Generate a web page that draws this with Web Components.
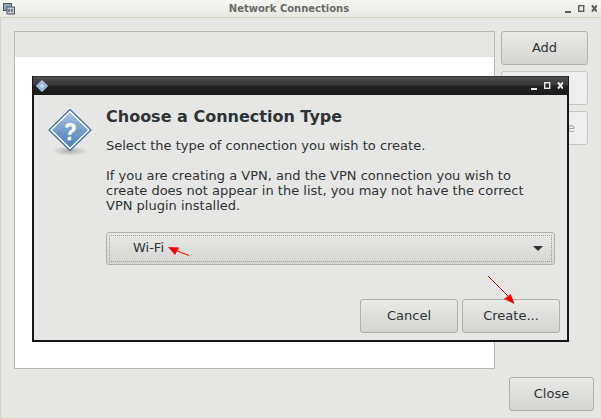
<!DOCTYPE html>
<html><head><meta charset="utf-8"><style>
html,body{margin:0;padding:0;background:#e6e6e4;overflow:hidden}
body{width:601px;height:419px;font-family:"DejaVu Sans",sans-serif;color:#2e3436}
</style></head><body>
<nc-window>
  <nc-list slot="list"></nc-list>
  <nc-button slot="side">Add</nc-button>
  <nc-button slot="side" disabled></nc-button>
  <nc-button slot="side" disabled><span style="display:block;width:100%;text-align:right;padding-right:12px;box-sizing:border-box">e</span></nc-button>
  <nc-button slot="close" style="width:85px">Close</nc-button>
</nc-window>
<nc-dialog></nc-dialog>
<nc-arrows></nc-arrows>
<script>
function def(name,html){
  customElements.define(name,class extends HTMLElement{
    constructor(){super();this.attachShadow({mode:'open'}).innerHTML=html;}
  });
}
const wmBtns=(c)=>`<svg width="32" height="10" viewBox="0 0 32 10" style="display:block;flex:none"><rect x="0" y="7" width="6" height="2" fill="${c}"/><rect x="13.7" y="1.7" width="5" height="5.6" fill="none" stroke="${c}" stroke-width="1.4"/><path d="M27 1.5l5 6M32 1.5l-5 6" stroke="${c}" stroke-width="2"/></svg>`;
def('nc-button',`<style>
:host{display:flex;align-items:center;justify-content:center;box-sizing:border-box;width:87px;height:34px;padding-bottom:2px;border:1px solid #b0b0ac;border-radius:3px;background:linear-gradient(#e9e9e7,#d4d4d1);font:13px "DejaVu Sans",sans-serif;color:#2e3436}
:host([disabled]){background:#eeeeee;border-color:#c4c4c0;color:#a5a8a8}
</style><slot></slot>`);
def('nc-list',`<style>
:host{display:flex;flex-direction:column;box-sizing:border-box;width:481px;height:338px;border:1px solid #b8b8b5;background:#fff}
.h{height:25px;background:#e6e6e4}
</style><div class="h"></div>`);
def('nc-window',`<style>
:host{display:flex;flex-direction:column;box-sizing:border-box;width:601px;height:419px;border-left:1px solid #d3d3bd;border-bottom:1px solid #d3d3bd;background:#e6e6e4}
.tb{display:flex;align-items:center;height:18px;box-sizing:border-box;margin-left:-1px;padding:0 4px 0 3px;background:linear-gradient(#f6f6f3,#e8e8e2);border-bottom:1px solid #d3d3bd}
.ic{width:12px;height:12px;flex:none}
.t{flex:1;text-align:center;font:bold 10px "DejaVu Sans",sans-serif;color:#6b6b69;padding-right:2px}
.main{display:flex;gap:6px;padding:13px 0 0 13px}
.side{display:flex;flex-direction:column;gap:6px}
.foot{display:flex;justify-content:flex-end;padding:8px 7px 0 0}
</style>
<div class="tb">
<svg class="ic" viewBox="0 0 12 12"><rect x="0.5" y="0.5" width="8" height="7" fill="#8fa3b5" stroke="#4d5a66"/><rect x="4" y="4" width="7.5" height="7" fill="#c5ccd2" stroke="#4d5a66"/><path d="M6 6v3M9 6v3" stroke="#334" stroke-width="1"/></svg>
<div class="t">Network Connections</div>${wmBtns('#56605e')}
</div>
<div class="main"><slot name="list"></slot><div class="side"><slot name="side"></slot></div></div>
<div class="foot"><slot name="close"></slot></div>`);
def('nc-dialog',`<style>
:host{position:absolute;left:32px;top:76px;box-sizing:border-box;width:537px;height:266px;display:flex;flex-direction:column;border:2px solid #161616;border-top:1px solid #333;background:#e6e6e4}
.tb{display:flex;align-items:center;height:18px;flex:none;padding:0 5px 0 3px;margin:0 -1px;background:linear-gradient(#555 0,#4a4a4a 1px,#3a3a3a 8px,#222 9px,#1b1b1b 100%)}
.sp{flex:1}
.body{display:flex;flex:1;min-height:0;padding:12px 0 0 14px}
.ic{width:44px;height:50px;flex:none;margin-right:14px;margin-top:2px}
.c{display:flex;flex-direction:column;width:449px}
h1{margin:0;font:bold 16px/20px "DejaVu Sans",sans-serif;color:#2e3436}
p{margin:0;font:13px/15px "DejaVu Sans",sans-serif;color:#2e3436}
.p1{margin-top:11px}.p2{margin-top:15px}
.combo{margin-top:19px;box-sizing:border-box;height:33px;border:1px solid #b0b0ac;border-radius:3px;background:linear-gradient(#e8e8e6,#d5d5d2);padding:2px;font:13px "DejaVu Sans",sans-serif}
.in{box-sizing:border-box;height:100%;border:1px dotted #9c9c98;border-radius:1px;display:flex;align-items:center;padding:0 8px 2px 23px}
.tri{width:0;height:0;border:5px solid transparent;border-top:5px solid #2e3436;border-bottom:0;margin-left:auto;margin-top:2px}
.btns{display:flex;gap:4px;justify-content:flex-end;margin-top:34px;margin-right:-5px}
</style>
<div class="tb">
<svg width="12" height="12" viewBox="0 0 12 12"><path d="M6 .5L11.5 6 6 11.5 .5 6z" fill="#8fb5e0" stroke="#c7d8ec"/><path d="M6 3.5L8.5 6 6 8.5 3.5 6z" fill="#c5daf0"/></svg>
<span class="sp"></span>${wmBtns('#e8e8e8')}
</div>
<div class="body">
<svg class="ic" viewBox="0 0 44 50">
<defs><linearGradient id="g" x1="0" y1="0" x2="0" y2="1"><stop offset="0" stop-color="#a9c4e2"/><stop offset=".55" stop-color="#6f9bcb"/><stop offset="1" stop-color="#4f7fb6"/></linearGradient>
<radialGradient id="s"><stop offset="0" stop-color="#000" stop-opacity=".25"/><stop offset="1" stop-color="#000" stop-opacity="0"/></radialGradient></defs>
<ellipse cx="22" cy="42" rx="18" ry="5" fill="url(#s)"/>
<path d="M22 .5L43 21 22 41.5 1 21z" fill="#fff" stroke="#3f6fa8" stroke-width="1.2" stroke-linejoin="round"/>
<path d="M22 3.5L40 21 22 38.5 4 21z" fill="url(#g)"/>
<g transform="translate(0 2)"><path d="M16.8 15.5c1-2.3 3-3.4 5.5-3.4 3.3 0 5.6 1.9 5.6 4.7 0 2.2-1.2 3.3-2.8 4.4-1.2.8-1.6 1.4-1.6 2.6h-3.4c0-2.2.7-3.3 2.3-4.5 1.2-.9 1.8-1.4 1.8-2.4 0-1-.8-1.7-2-1.7-1.3 0-2.2.7-2.8 2z" fill="#fff"/><rect x="19.7" y="25.8" width="3.5" height="3.5" fill="#fff"/></g>
</svg>
<div class="c">
<h1>Choose a Connection Type</h1>
<p class="p1">Select the type of connection you wish to create.</p>
<p class="p2">If you are creating a VPN, and the VPN connection you wish to<br>create does not appear in the list, you may not have the correct<br>VPN plugin installed.</p>
<div class="combo"><div class="in"><span>Wi-Fi</span><span class="tri"></span></div></div>
<div class="btns"><nc-button style="width:98px">Cancel</nc-button><nc-button style="width:98px">Create...</nc-button></div>
</div></div>`);
def('nc-arrows',`<style>:host{position:absolute;left:0;top:0;width:601px;height:419px;pointer-events:none}svg{display:block}</style>
<svg width="601" height="419" viewBox="0 0 601 419">
<path d="M189 255.5L172 249" stroke="#f00" stroke-width="1" fill="none"/>
<path d="M168 247L179 247.5L175 255z" fill="#f00"/>
<path d="M488 276L510 298" stroke="#f00" stroke-width="1" fill="none"/>
<path d="M514.5 304L504 299L510.7 294z" fill="#f00"/>
</svg>`);
</script>
</body></html>
